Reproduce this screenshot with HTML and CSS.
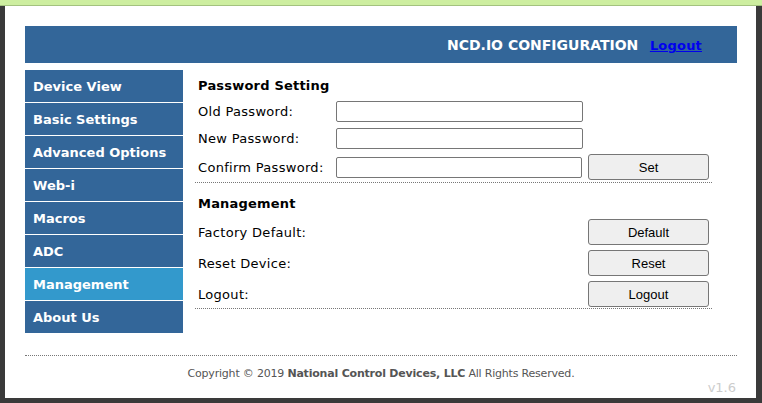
FILE: index.html
```html
<!DOCTYPE html>
<html lang="en">
<head>
  <meta charset="UTF-8">
  <meta name="viewport" content="width=device-width, initial-scale=1.0">
  <title>NCD.IO Configuration</title>
  <link rel="stylesheet" href="styles.css">
</head>
<body>
  <div class="topstrip"></div>
  <div class="window">
    <div class="page">
      <div class="header">
        <span class="title">NCD.IO CONFIGURATION</span>
        <a href="#" class="logout-link">Logout</a>
      </div>

      <div class="main">
        <ul class="menu">
          <li><a href="#">Device View</a></li>
          <li><a href="#">Basic Settings</a></li>
          <li><a href="#">Advanced Options</a></li>
          <li><a href="#">Web-i</a></li>
          <li><a href="#">Macros</a></li>
          <li><a href="#">ADC</a></li>
          <li class="active"><a href="#">Management</a></li>
          <li><a href="#">About Us</a></li>
        </ul>

        <div class="content">
          <div class="section">
            <h3>Password Setting</h3>
            <div class="row">
              <label>Old Password:</label>
              <input type="password" class="field">
            </div>
            <div class="row">
              <label>New Password:</label>
              <input type="password" class="field">
            </div>
            <div class="row row-last">
              <label>Confirm Password:</label>
              <input type="password" class="field">
              <button class="btn">Set</button>
            </div>
          </div>

          <div class="section">
            <h3>Management</h3>
            <div class="row row-action">
              <label>Factory Default:</label>
              <button class="btn">Default</button>
            </div>
            <div class="row row-action">
              <label>Reset Device:</label>
              <button class="btn">Reset</button>
            </div>
            <div class="row row-action row-last">
              <label>Logout:</label>
              <button class="btn">Logout</button>
            </div>
          </div>
        </div>
      </div>

      <div class="footer">
        <p>Copyright &copy; 2019 <b>National Control Devices, LLC</b> All Rights Reserved.</p>
        <div class="version">v1.6</div>
      </div>
    </div>
  </div>
</body>
</html>
```

FILE: styles.css
```css
* {
  box-sizing: border-box;
  margin: 0;
  padding: 0;
}

body {
  background-color: #3a3a3a;
  font-family: "DejaVu Sans", Verdana, sans-serif;
  font-size: 13px;
  color: #000;
  height: 403px;
  overflow: hidden;
}

.topstrip {
  height: 6px;
  background-color: #cdeea0;
  border-bottom: 1px solid #a3c27f;
}

.window {
  margin: 0 6px 0 5px;
  height: 392px;
  background: #fff;
  padding: 20px 0 0 20px;
}

.page {
  width: 712px;
}

.header {
  height: 37px;
  background-color: #336699;
  text-align: right;
  padding: 11px 35px 0 0;
  font-weight: bold;
  font-size: 13px;
}

.header .title {
  color: #fff;
  font-size: 14px;
}

.logout-link {
  color: #0000ee;
  margin-left: 7px;
  letter-spacing: 0.2px;
}

.main {
  display: flex;
  margin-top: 7px;
}

.menu {
  list-style: none;
  width: 158px;
  flex-shrink: 0;
}

.menu li {
  margin-bottom: 1px;
}

.menu li a {
  display: block;
  height: 32px;
  line-height: 33px;
  padding-left: 8px;
  background-color: #336699;
  color: #fff;
  font-weight: bold;
  text-decoration: none;
}

.menu li.active a {
  background-color: #3399cc;
}

.content {
  margin-left: 12px;
  width: 517px;
  padding-top: 4px;
}

.section h3 {
  font-size: 13px;
  line-height: 24px;
  padding-left: 3px;
  letter-spacing: 0.2px;
}

.section + .section {
  margin-top: 9px;
}

.row {
  display: flex;
  align-items: center;
  padding: 3px;
}

.row label {
  width: 138px;
  letter-spacing: 0.3px;
}

.row-last {
  border-bottom: 1px dotted #777;
  padding-top: 2px;
  padding-bottom: 2px;
}

.row-action {
  justify-content: space-between;
  padding: 3px 3px 2px 3px;
}

.row-action.row-last {
  padding-bottom: 1px;
}

.field {
  width: 247px;
  height: 21px;
  border: 1px solid #767676;
  border-radius: 2px;
}

.btn {
  width: 121px;
  height: 26px;
  margin-left: 6px;
  background-color: #efefef;
  border: 1px solid #767676;
  border-radius: 3px;
  font-family: "Liberation Sans", Arial, sans-serif;
  font-size: 13px;
  color: #000;
}

.footer {
  margin-top: 21px;
  border-top: 1px dotted #777;
  text-align: center;
  color: #555;
  font-size: 11px;
}

.footer p {
  padding-top: 11px;
  line-height: 14px;
  letter-spacing: -0.2px;
}

.version {
  text-align: right;
  color: #ccc;
  font-size: 13px;
  margin-top: -1px;
  padding-right: 1px;
}
```
